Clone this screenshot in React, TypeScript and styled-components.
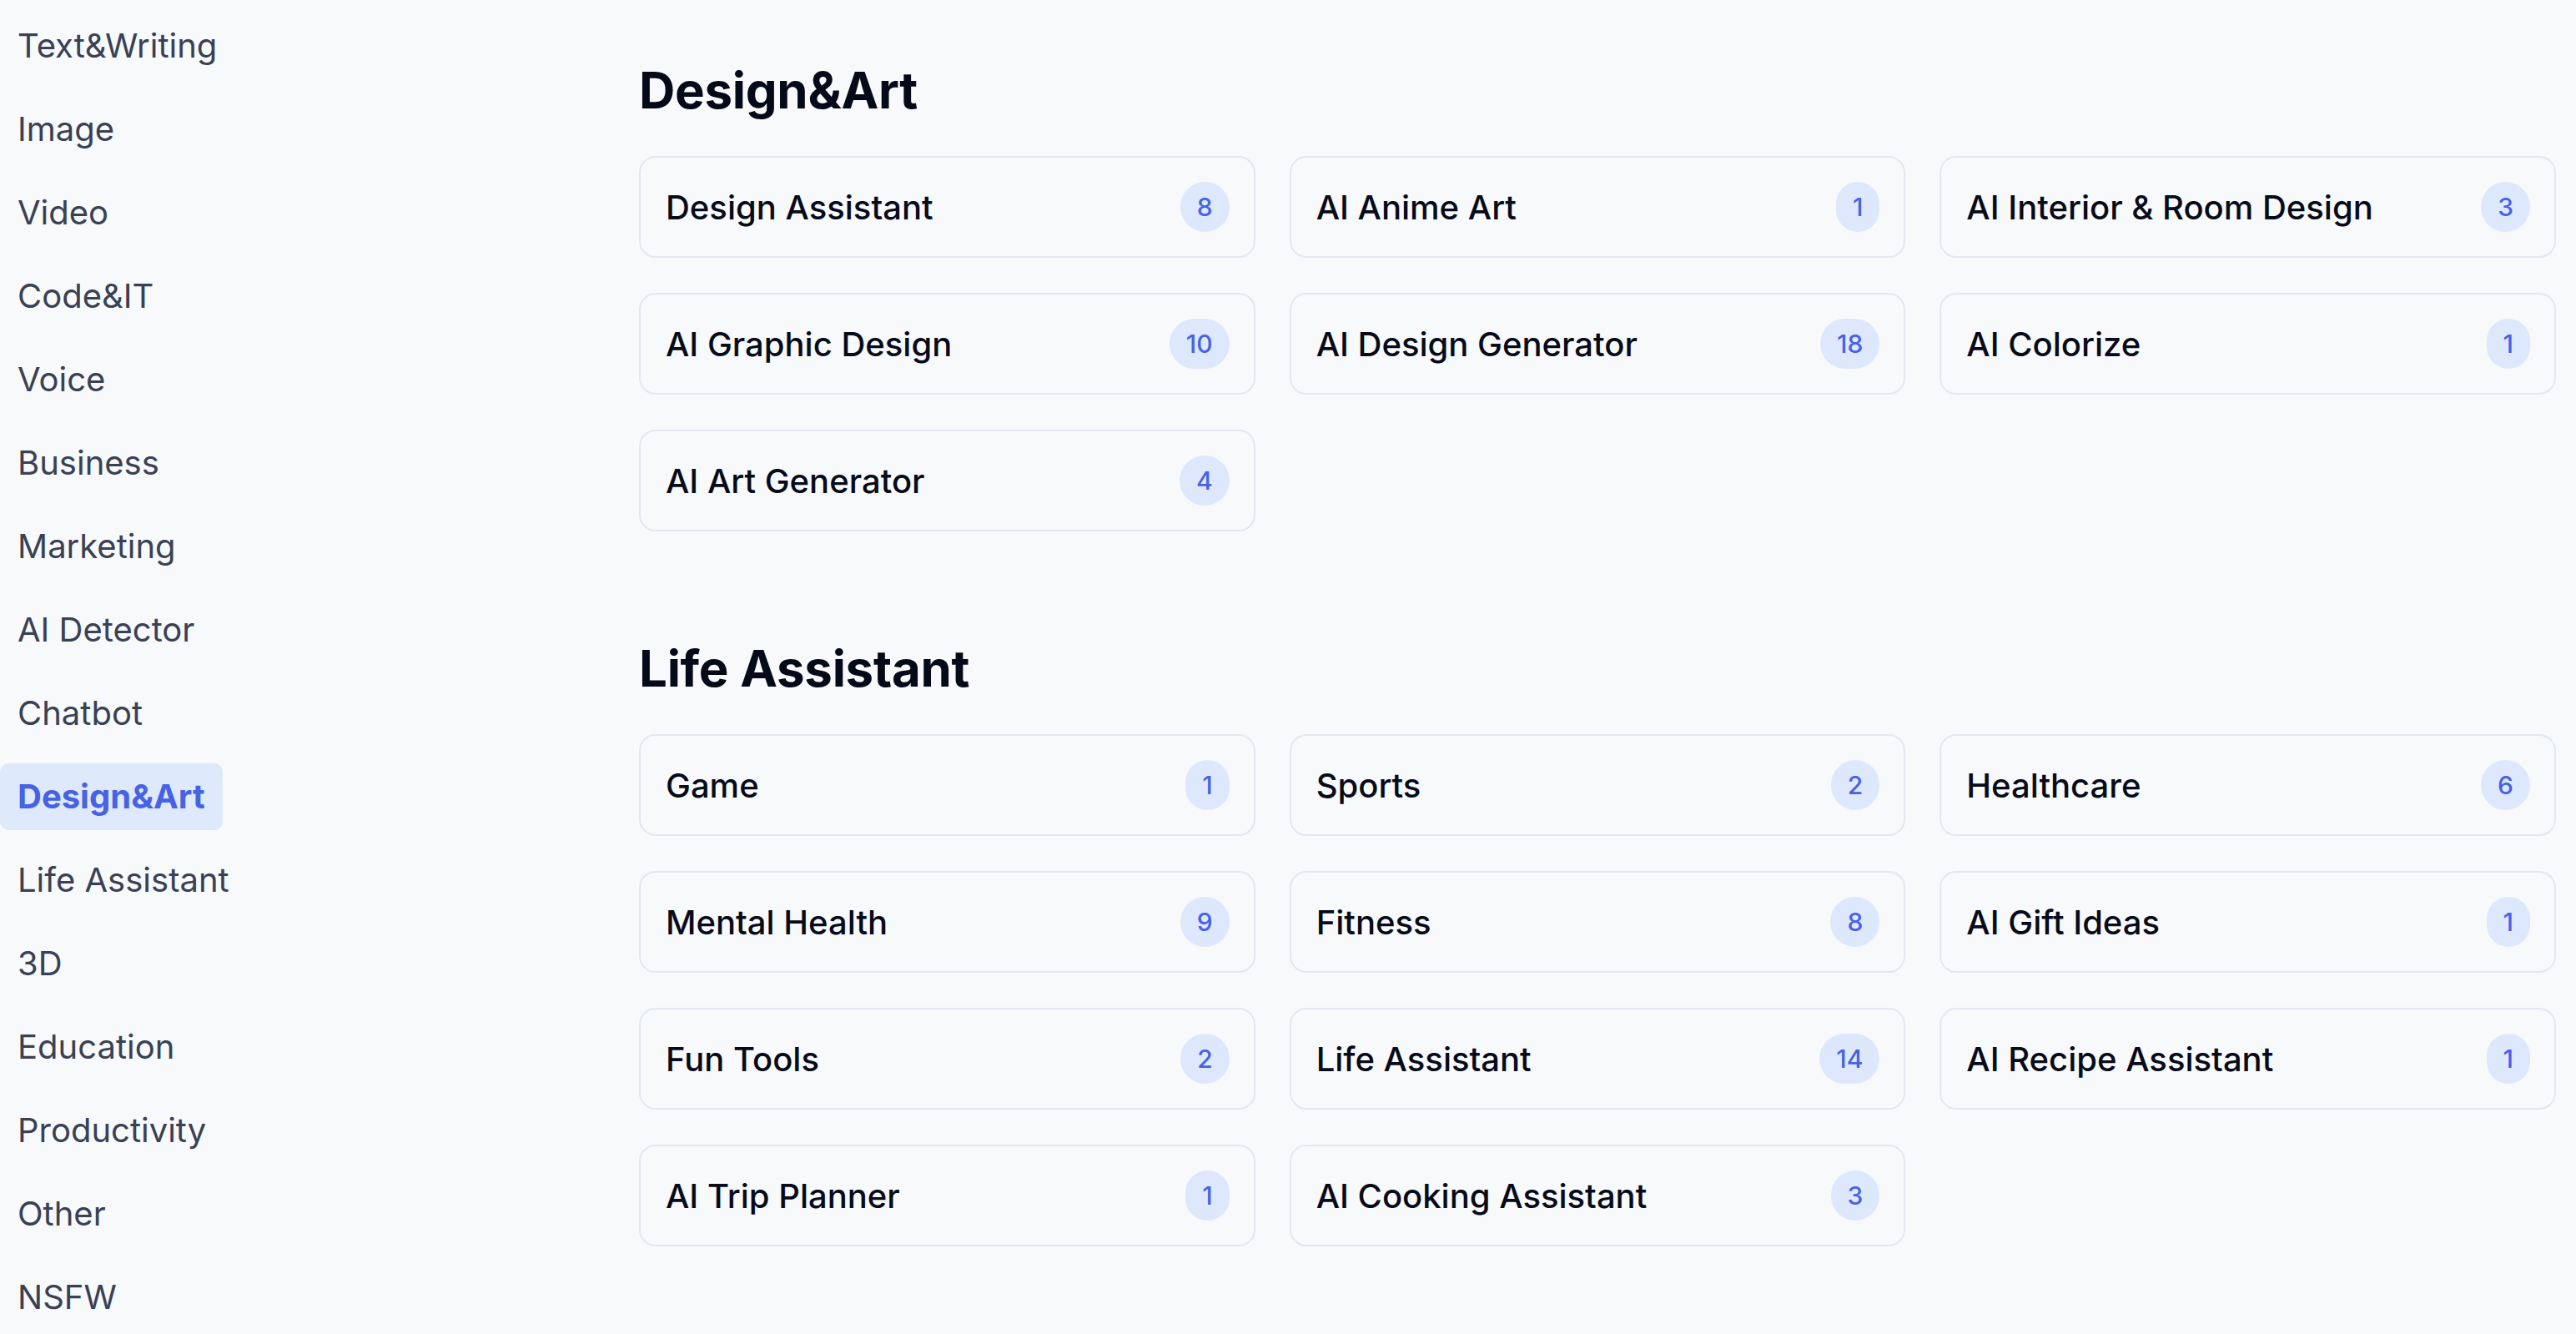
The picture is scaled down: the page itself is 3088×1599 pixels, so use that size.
import React from "react";
import styled, { createGlobalStyle } from "styled-components";

const GlobalStyle = createGlobalStyle`
  html, body {
    margin: 0;
    padding: 0;
    background: #f8f9fb;
    font-family: Inter, "Noto Sans", "Liberation Sans", sans-serif;
  }
  * { box-sizing: border-box; }
`;

const Page = styled.div`
  display: grid;
  grid-template-columns: 766px 1fr;
  min-height: 1599px;
  background: #f8f9fb;
  overflow: hidden;
`;

const Sidebar = styled.nav`
  display: flex;
  flex-direction: column;
  align-items: flex-start;
  gap: 20px;
  padding-top: 15px;
`;

const NavItem = styled.a<{ $active?: boolean }>`
  display: block;
  height: 80px;
  line-height: 80px;
  padding: 0 21px;
  border-radius: 10px;
  font-size: 40px;
  font-weight: ${(p) => (p.$active ? 700 : 400)};
  color: ${(p) => (p.$active ? "#4762e5" : "#394154")};
  background: ${(p) => (p.$active ? "#dfe9fc" : "transparent")};
  text-decoration: none;
  white-space: nowrap;
`;

const Main = styled.main`
  display: flex;
  flex-direction: column;
  gap: 128px;
  padding: 72px 24px 0 0;
`;

const Section = styled.section`
  display: flex;
  flex-direction: column;
  gap: 43px;
`;

const Heading = styled.h2`
  margin: 0;
  font-size: 60px;
  line-height: 72px;
  font-weight: 700;
  color: #050a19;
  letter-spacing: -0.3px;
`;

const Grid = styled.div`
  display: grid;
  grid-template-columns: repeat(3, 1fr);
  column-gap: 41px;
  row-gap: 42px;
`;

const Card = styled.a`
  display: flex;
  align-items: center;
  justify-content: space-between;
  height: 122px;
  padding: 0 29px 0 30px;
  border: 2px solid #e3e8f0;
  border-radius: 20px;
  background: #f8f9fb;
  text-decoration: none;
`;

const CardTitle = styled.span`
  font-size: 40px;
  font-weight: 500;
  color: #070b1a;
  white-space: nowrap;
`;

const Badge = styled.span`
  display: inline-flex;
  align-items: center;
  justify-content: center;
  height: 60px;
  padding: 0 20px;
  border-radius: 9999px;
  background: #dee8fd;
  color: #4862e4;
  font-size: 30px;
  font-weight: 500;
`;

const categories = [
  "Text&Writing",
  "Image",
  "Video",
  "Code&IT",
  "Voice",
  "Business",
  "Marketing",
  "AI Detector",
  "Chatbot",
  "Design&Art",
  "Life Assistant",
  "3D",
  "Education",
  "Productivity",
  "Other",
  "NSFW",
];

const sections: { title: string; items: [string, number][] }[] = [
  {
    title: "Design&Art",
    items: [
      ["Design Assistant", 8],
      ["AI Anime Art", 1],
      ["AI Interior & Room Design", 3],
      ["AI Graphic Design", 10],
      ["AI Design Generator", 18],
      ["AI Colorize", 1],
      ["AI Art Generator", 4],
    ],
  },
  {
    title: "Life Assistant",
    items: [
      ["Game", 1],
      ["Sports", 2],
      ["Healthcare", 6],
      ["Mental Health", 9],
      ["Fitness", 8],
      ["AI Gift Ideas", 1],
      ["Fun Tools", 2],
      ["Life Assistant", 14],
      ["AI Recipe Assistant", 1],
      ["AI Trip Planner", 1],
      ["AI Cooking Assistant", 3],
    ],
  },
];

export default function App() {
  return (
    <>
      <GlobalStyle />
      <Page>
        <Sidebar>
          {categories.map((c) => (
            <NavItem key={c} $active={c === "Design&Art"}>
              {c}
            </NavItem>
          ))}
        </Sidebar>
        <Main>
          {sections.map((s) => (
            <Section key={s.title}>
              <Heading>{s.title}</Heading>
              <Grid>
                {s.items.map(([name, count]) => (
                  <Card key={name}>
                    <CardTitle>{name}</CardTitle>
                    <Badge>{count}</Badge>
                  </Card>
                ))}
              </Grid>
            </Section>
          ))}
        </Main>
      </Page>
    </>
  );
}
